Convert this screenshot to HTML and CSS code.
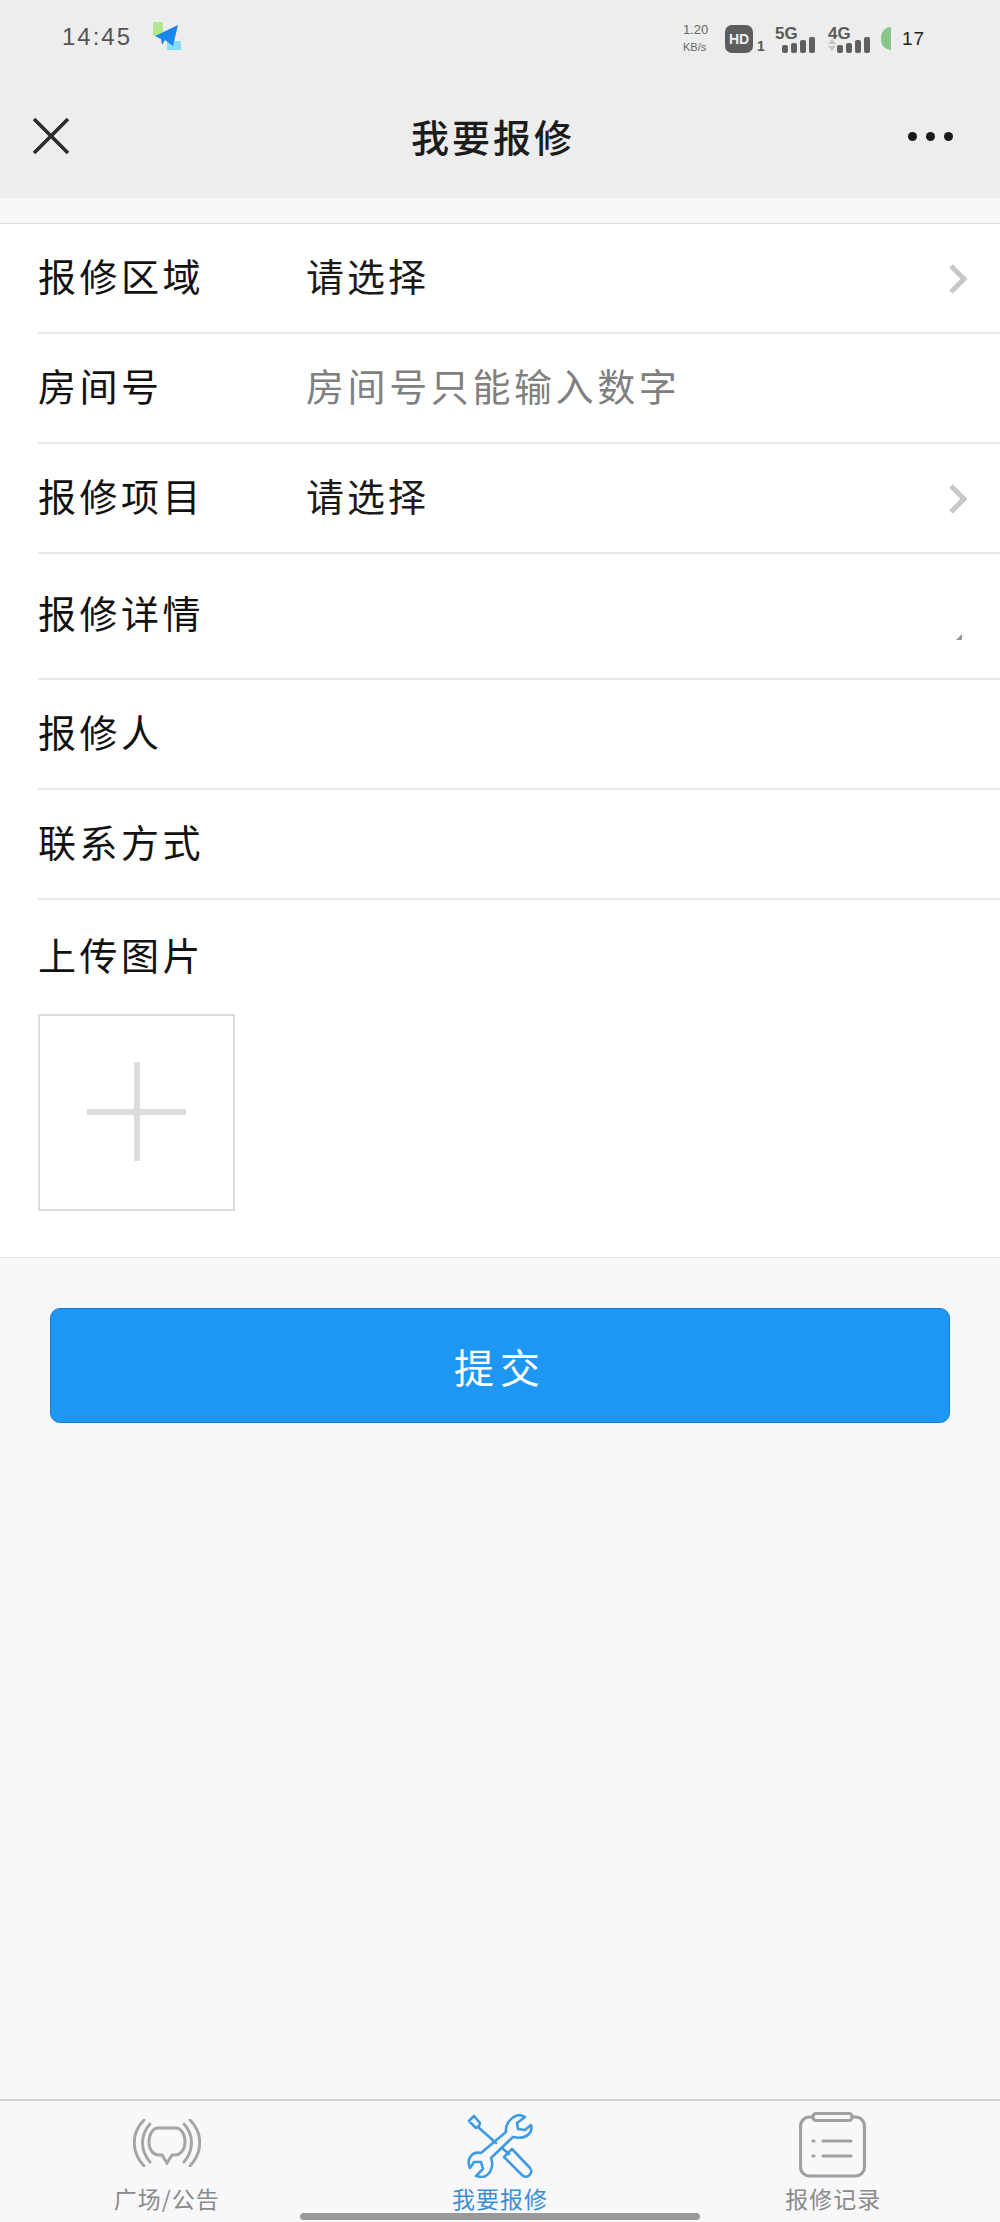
FILE: index.html
```html
<!DOCTYPE html>
<html lang="zh-CN">
<head>
    <meta charset="UTF-8">
    <meta name="viewport" content="width=device-width, initial-scale=1.0">
    <title>我要报修</title>
    <link rel="stylesheet" href="styles.css">
</head>
<body>
    <div class="page">
        <header class="top-bar">
            <div class="status-bar">
                <div class="status-left">
                    <span class="clock">14:45</span>
                    <svg class="app-icon" width="30" height="30" viewBox="0 0 30 30">
                        <rect x="1" y="0" width="10" height="14" fill="#b4e88e"/>
                        <rect x="15" y="19" width="14" height="9" fill="#86dcf7"/>
                        <path d="M3 14 L26 3 L21 24 L13 18 L10 23 L9 17 Z" fill="#1a86ea"/>
                    </svg>
                </div>
                <div class="status-right">
                    <div class="speed"><span>1.20</span><span class="speed-unit">KB/s</span></div>
                    <div class="hd-wrap"><span class="hd">HD</span><span class="hd-sub">1</span></div>
                    <div class="signal"><span class="net">5G</span>
                        <svg width="34" height="16" viewBox="0 0 34 16"><rect x="0" y="8" width="6" height="8" rx="2"/><rect x="9" y="6" width="6" height="10" rx="2"/><rect x="18" y="3" width="6" height="13" rx="2"/><rect x="27" y="0" width="6" height="16" rx="2"/></svg>
                    </div>
                    <div class="signal"><span class="net">4G</span>
                        <svg width="42" height="16" viewBox="0 0 42 16"><path d="M4 2 L8 7 H0 Z M0 9 H8 L4 14 Z" fill="#c4c4c4"/><rect x="9" y="8" width="6" height="8" rx="2"/><rect x="18" y="6" width="6" height="10" rx="2"/><rect x="27" y="3" width="6" height="13" rx="2"/><rect x="36" y="0" width="6" height="16" rx="2"/></svg>
                    </div>
                    <div class="battery"><span class="battery-fill"></span><span class="battery-num">17</span></div>
                </div>
            </div>
            <div class="nav-bar">
                <svg class="nav-close" width="36" height="36" viewBox="0 0 36 36"><path d="M1 1 L35 35 M35 1 L1 35" stroke="#2c2c2c" stroke-width="3.6" fill="none"/></svg>
                <h1 class="nav-title">我要报修</h1>
                <div class="nav-more"><i></i><i></i><i></i></div>
            </div>
        </header>

        <main class="content">
            <section class="form">
                <div class="row">
                    <span class="label">报修区域</span>
                    <span class="value">请选择</span>
                    <svg class="chevron" width="18" height="30" viewBox="0 0 18 30"><path d="M2 2 L15 15 L2 28" stroke="#c8c8c8" stroke-width="5" fill="none"/></svg>
                </div>
                <div class="row">
                    <span class="label">房间号</span>
                    <span class="value placeholder">房间号只能输入数字</span>
                </div>
                <div class="row">
                    <span class="label">报修项目</span>
                    <span class="value">请选择</span>
                    <svg class="chevron" width="18" height="30" viewBox="0 0 18 30"><path d="M2 2 L15 15 L2 28" stroke="#c8c8c8" stroke-width="5" fill="none"/></svg>
                </div>
                <div class="row row-detail">
                    <span class="label">报修详情</span>
                    <svg class="resize-mark" width="6" height="6" viewBox="0 0 6 6"><path d="M6 0 V6 H0 Z" fill="#999"/></svg>
                </div>
                <div class="row">
                    <span class="label">报修人</span>
                </div>
                <div class="row">
                    <span class="label">联系方式</span>
                </div>
                <div class="upload">
                    <span class="label">上传图片</span>
                    <div class="upload-box"><span class="plus-h"></span><span class="plus-v"></span></div>
                </div>
            </section>
            <div class="submit-wrap">
                <button class="submit">提交</button>
            </div>
        </main>

        <nav class="tab-bar">
            <div class="tab">
                <svg class="tab-icon tab-icon-bell" width="68" height="48" viewBox="0 0 68 48" fill="none" stroke="#a5a5a5" stroke-width="3" stroke-linecap="round">
                    <path d="M11 1 C-2 14 -2 33 11 47"/>
                    <path d="M17 5 C7 16 7 31 17 43"/>
                    <path d="M57 1 C70 14 70 33 57 47"/>
                    <path d="M51 5 C61 16 61 31 51 43"/>
                    <path d="M25 9 H43 C48 9 52 15 52 23 C52 31 47 36 42 36 H39 L34 44 L29 36 H26 C20 36 16 31 16 23 C16 15 20 9 25 9 Z"/>
                </svg>
                <span class="tab-label">广场/公告</span>
            </div>
            <div class="tab tab-active">
                <svg class="tab-icon" width="66" height="64" viewBox="-1 -1 66 64" fill="none" stroke="#3d9be4" stroke-width="2.6" stroke-linejoin="round" stroke-linecap="round">
                    <path d="M38 17 C37 8 44 1 52 0 L57 2 L49 8 L50 14 L57 15 L63 10 C65 18 58 25 45 22 L23 43 C27 54 20 62 13 62 L8 61 L15 54 L13 47 L6 47 L2 53 C-2 44 4 36 13 38 Z"/>
                    <path d="M1 6 L6 1 L12 8 L11 11 L8 13 Z"/>
                    <path d="M10 12 L28 28"/>
                    <path d="M34 33 L41 39"/>
                    <path d="M44 34 L62 53 C66 58 59 65 54 60 L36 42 Z"/>
                </svg>
                <span class="tab-label">我要报修</span>
            </div>
            <div class="tab">
                <svg class="tab-icon" width="68" height="66" viewBox="0 0 68 66" fill="none" stroke="#a0a0a0" stroke-width="3.2" stroke-linecap="round">
                    <rect x="1.5" y="5" width="64" height="59" rx="9"/>
                    <rect x="14" y="1.5" width="39" height="7" rx="3" fill="#f8f8fa"/>
                    <path d="M24 29 H52 M24 44 H52"/>
                    <path d="M14 29 H15 M14 44 H15"/>
                </svg>
                <span class="tab-label">报修记录</span>
            </div>
            <span class="home-bar"></span>
        </nav>
    </div>
</body>
</html>
```

FILE: styles.css
```css
* {
    box-sizing: border-box;
}
body {
    margin: 0;
    font-family: "Noto Sans CJK SC", "Liberation Sans", sans-serif;
    background-color: #f8f8f9;
}
.page {
    width: 1000px;
    height: 2222px;
    display: flex;
    flex-direction: column;
    overflow: hidden;
}

/* top */
.top-bar {
    height: 198px;
    background-color: #ededed;
}
.status-bar {
    height: 80px;
    padding: 22px 55px 0 62px;
    display: flex;
    justify-content: space-between;
    align-items: flex-start;
    color: #555;
}
.status-left {
    display: flex;
    align-items: center;
    gap: 20px;
}
.clock {
    font-size: 24px;
    line-height: 30px;
    letter-spacing: 2px;
    font-family: "Liberation Sans", sans-serif;
}
.status-right {
    display: flex;
    align-items: flex-start;
    width: 262px;
}
.speed {
    width: 42px;
    display: flex;
    flex-direction: column;
    font-family: "Liberation Sans", sans-serif;
    font-size: 13px;
    line-height: 16px;
    color: #666;
    white-space: nowrap;
}
.speed-unit {
    font-size: 11px;
    line-height: 18px;
}
.hd-wrap {
    width: 50px;
    display: flex;
    align-items: flex-end;
    height: 28px;
    margin-top: 3px;
}
.hd {
    width: 28px;
    height: 28px;
    border-radius: 7px;
    background-color: #5d5d5d;
    color: #eee;
    font: bold 14px/28px "Liberation Sans", sans-serif;
    text-align: center;
}
.hd-sub {
    font: bold 14px/14px "Liberation Sans", sans-serif;
    margin-left: 4px;
    color: #555;
}
.signal {
    position: relative;
    height: 28px;
    margin-top: 3px;
    display: flex;
    flex-direction: column;
    align-items: flex-end;
    justify-content: flex-end;
}
.signal svg {
    display: block;
    fill: #5f5f5f;
}
.signal:nth-child(3) {
    width: 41px;
    margin-right: 12px;
}
.signal:nth-child(4) {
    width: 42px;
    margin-right: 11px;
}
.net {
    position: absolute;
    left: 0;
    top: 0;
    font: bold 17px/17px "Liberation Sans", sans-serif;
    color: #5a5a5a;
}
.battery {
    display: flex;
    align-items: center;
    margin-top: 5px;
    height: 23px;
}
.battery-fill {
    width: 10px;
    height: 23px;
    border-radius: 10px 0 0 10px;
    background-color: #86c686;
}
.battery-num {
    margin-left: 11px;
    font: 19px/23px "Liberation Sans", sans-serif;
    letter-spacing: 1px;
    color: #222;
}
.nav-bar {
    height: 118px;
    padding: 0 47px 6px 33px;
    display: grid;
    grid-template-columns: 1fr auto 1fr;
    align-items: center;
}
.nav-close {
    display: block;
}
.nav-title {
    margin: 0;
    font-size: 38px;
    font-weight: 500;
    line-height: 56px;
    letter-spacing: 3px;
    color: #1c1c1c;
}
.nav-more {
    display: flex;
    gap: 9px;
    justify-content: flex-end;
}
.nav-more i {
    width: 9px;
    height: 9px;
    border-radius: 50%;
    background-color: #1a1a1a;
}

/* form */
.content {
    flex: 1;
    padding-top: 25px;
}
.form {
    background-color: #fff;
    border-top: 1px solid #dcdcdc;
    border-bottom: 1px solid #e6e6e6;
    height: 1035px;
}
.row {
    height: 110px;
    margin-left: 38px;
    padding-bottom: 6px;
    display: flex;
    align-items: center;
    border-bottom: 2px solid #e8e8e8;
    position: relative;
}
.row-detail {
    height: 126px;
    padding-bottom: 8px;
}
.label {
    width: 268px;
    flex-shrink: 0;
    font-size: 38px;
    line-height: 54px;
    color: #111;
    letter-spacing: 3.5px;
}
.value {
    font-size: 38px;
    line-height: 54px;
    letter-spacing: 3px;
    color: #1a1a1a;
}
.placeholder {
    letter-spacing: 3.6px;
    color: #808080;
}
.chevron {
    position: absolute;
    right: 33px;
    top: 40px;
}
.resize-mark {
    position: absolute;
    right: 38px;
    bottom: 38px;
}
.upload {
    padding: 27px 0 0 38px;
}
.upload .label {
    display: block;
}
.upload-box {
    width: 197px;
    height: 197px;
    margin-top: 33px;
    border: 2px solid #dcdcdc;
    position: relative;
}
.plus-h {
    position: absolute;
    left: 47px;
    top: 93px;
    width: 99px;
    height: 6px;
    background-color: #dcdcdc;
}
.plus-v {
    position: absolute;
    left: 94px;
    top: 46px;
    width: 6px;
    height: 99px;
    background-color: #dcdcdc;
}
.submit-wrap {
    padding: 50px 50px 0;
}
.submit {
    display: block;
    width: 100%;
    height: 115px;
    border: 1px solid #1a7fd0;
    border-radius: 10px;
    background-color: #1e96f3;
    color: #fff;
    font-family: inherit;
    font-size: 40px;
    letter-spacing: 6px;
}

/* tabs */
.tab-bar {
    height: 123px;
    border-top: 2px solid #d2d2d2;
    background-color: #f8f8fa;
    display: flex;
    position: relative;
}
.tab {
    flex: 1;
    display: flex;
    flex-direction: column;
    align-items: center;
    justify-content: flex-end;
    padding-bottom: 6px;
    color: #8a8a8a;
}
.tab-icon {
    display: block;
    margin-bottom: 2px;
}
.tab-icon-bell {
    margin-bottom: 13px;
}
.tab-label {
    font-size: 23px;
    line-height: 36px;
    letter-spacing: 1px;
}
.tab-active {
    color: #3a8fd2;
}
.home-bar {
    position: absolute;
    left: 300px;
    bottom: 2px;
    width: 400px;
    height: 7px;
    border-radius: 4px;
    background-color: #999;
}
```
